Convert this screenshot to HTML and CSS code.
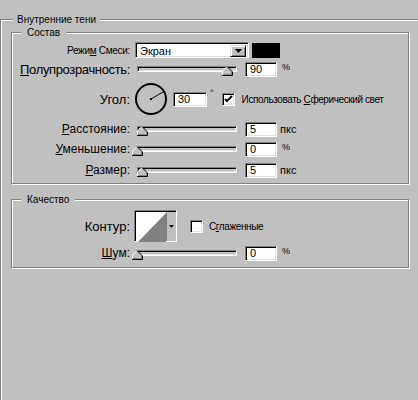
FILE: index.html
```html
<!DOCTYPE html>
<html lang="ru">
<head>
<meta charset="utf-8">
<title>Внутренние тени</title>
<link rel="stylesheet" href="styles.css">
</head>
<body>
<fieldset class="group outer">
  <legend>Внутренние тени</legend>

  <fieldset class="group sub sub-struct">
    <legend>Состав</legend>

    <div class="row row-mode">
      <span class="lbl sm">Режи<u>м</u> Смеси:</span>
      <div class="select">
        <span class="select-value">Экран</span>
        <span class="select-btn"><svg width="7" height="4" viewBox="0 0 7 4"><polygon points="0,0 7,0 3.5,4" fill="#000"/></svg></span>
      </div>
      <div class="swatch"></div>
    </div>

    <div class="row row-opacity">
      <span class="lbl lg tight"><u>П</u>олупрозрачность:</span>
      <div class="slider">
        <div class="track"></div>
        <svg class="thumb" style="left: calc(90% - 5px)" width="11" height="10" viewBox="0 0 11 10"><polygon points="0.5,9.5 0.5,5 5,0.5 9.5,5 9.5,9.5" fill="#c0c0c0"/><polyline points="0.5,9 0.5,5 5,0.5" fill="none" stroke="#fff"/><polyline points="5,0.5 10.5,6 10.5,9.5 0,9.5" fill="none" stroke="#000"/><polyline points="9.5,6 9.5,8.5 1,8.5" fill="none" stroke="#808080"/></svg>
      </div>
      <div class="field">90</div>
      <span class="unit pct">%</span>
    </div>

    <div class="row row-angle">
      <span class="lbl lg">Угол:</span>
      <svg class="dial" width="34" height="34" viewBox="0 0 34 34">
        <circle cx="17" cy="17" r="15" fill="none" stroke="#000" stroke-width="2"/>
        <line x1="17" y1="17" x2="29" y2="10" stroke="#000" stroke-width="1"/>
        <rect x="16" y="16" width="2" height="2" fill="#000"/>
      </svg>
      <div class="field field-angle">30</div>
      <span class="deg">°</span>
      <span class="check checked"><svg width="9" height="9" viewBox="0 0 9 9"><polyline points="1,4 3,6 8,1" fill="none" stroke="#000" stroke-width="2"/></svg></span>
      <span class="check-lbl">Использовать <u>С</u>ферический свет</span>
    </div>

    <div class="row row-slider row-dist">
      <span class="lbl md"><u>Р</u>асстояние:</span>
      <div class="slider">
        <div class="track"></div>
        <svg class="thumb" style="left: calc(5% - 5px)" width="11" height="10" viewBox="0 0 11 10"><polygon points="0.5,9.5 0.5,5 5,0.5 9.5,5 9.5,9.5" fill="#c0c0c0"/><polyline points="0.5,9 0.5,5 5,0.5" fill="none" stroke="#fff"/><polyline points="5,0.5 10.5,6 10.5,9.5 0,9.5" fill="none" stroke="#000"/><polyline points="9.5,6 9.5,8.5 1,8.5" fill="none" stroke="#808080"/></svg>
      </div>
      <div class="field">5</div>
      <span class="unit">пкс</span>
    </div>

    <div class="row row-slider row-choke">
      <span class="lbl md"><u>У</u>меньшение:</span>
      <div class="slider">
        <div class="track"></div>
        <svg class="thumb" style="left: calc(0% - 5px)" width="11" height="10" viewBox="0 0 11 10"><polygon points="0.5,9.5 0.5,5 5,0.5 9.5,5 9.5,9.5" fill="#c0c0c0"/><polyline points="0.5,9 0.5,5 5,0.5" fill="none" stroke="#fff"/><polyline points="5,0.5 10.5,6 10.5,9.5 0,9.5" fill="none" stroke="#000"/><polyline points="9.5,6 9.5,8.5 1,8.5" fill="none" stroke="#808080"/></svg>
      </div>
      <div class="field">0</div>
      <span class="unit pct">%</span>
    </div>

    <div class="row row-slider row-size">
      <span class="lbl md"><u>Р</u>азмер:</span>
      <div class="slider">
        <div class="track"></div>
        <svg class="thumb" style="left: calc(5% - 5px)" width="11" height="10" viewBox="0 0 11 10"><polygon points="0.5,9.5 0.5,5 5,0.5 9.5,5 9.5,9.5" fill="#c0c0c0"/><polyline points="0.5,9 0.5,5 5,0.5" fill="none" stroke="#fff"/><polyline points="5,0.5 10.5,6 10.5,9.5 0,9.5" fill="none" stroke="#000"/><polyline points="9.5,6 9.5,8.5 1,8.5" fill="none" stroke="#808080"/></svg>
      </div>
      <div class="field">5</div>
      <span class="unit">пкс</span>
    </div>
  </fieldset>

  <fieldset class="group sub sub-quality">
    <legend>Качество</legend>

    <div class="row row-contour">
      <span class="lbl lg">Контур:</span>
      <div class="contour">
        <svg class="contour-preview" width="30" height="30" viewBox="0 0 30 30">
          <rect width="30" height="30" fill="#fff"/>
          <polygon points="2,30 30,1 30,30" fill="#808080"/>
        </svg>
        <span class="contour-btn"><svg width="5" height="3" viewBox="0 0 5 3"><polygon points="0,0 5,0 2.5,3" fill="#000"/></svg></span>
      </div>
      <span class="check"></span>
      <span class="check-lbl">С<u>г</u>лаженные</span>
    </div>

    <div class="row row-slider row-noise">
      <span class="lbl md"><u>Ш</u>ум:</span>
      <div class="slider">
        <div class="track"></div>
        <svg class="thumb" style="left: calc(0% - 5px)" width="11" height="10" viewBox="0 0 11 10"><polygon points="0.5,9.5 0.5,5 5,0.5 9.5,5 9.5,9.5" fill="#c0c0c0"/><polyline points="0.5,9 0.5,5 5,0.5" fill="none" stroke="#fff"/><polyline points="5,0.5 10.5,6 10.5,9.5 0,9.5" fill="none" stroke="#000"/><polyline points="9.5,6 9.5,8.5 1,8.5" fill="none" stroke="#808080"/></svg>
      </div>
      <div class="field">0</div>
      <span class="unit pct">%</span>
    </div>
  </fieldset>
</fieldset>
</body>
</html>
```

FILE: styles.css
```css
* { box-sizing: border-box; }

html, body {
  margin: 0;
  height: 400px;
  overflow: hidden;
  background: #c0c0c0;
}

body {
  font-family: "Liberation Sans", Arial, sans-serif;
  font-size: 11px;
  color: #000;
}

u { text-decoration: underline; text-underline-offset: 1px; }

.group {
  margin: 0;
  padding: 0;
  min-width: 0;
  border: 1px solid #808080;
  box-shadow: inset 1px 1px 0 #fff, 1px 1px 0 #fff;
}

.group > legend {
  font-size: 10px;
  line-height: 13px;
  background: #c0c0c0;
}

.outer {
  margin-top: 13px;
  width: 440px;
  height: 430px;
  padding: 0 0 0 10px;
}

.outer > legend {
  margin-left: 2px;
  padding: 0 4px;
}

.sub {
  width: 398px;
  display: flex;
  flex-direction: column;
}

.sub > legend {
  margin-left: 9px;
  padding: 0 6px;
}

.sub-struct {
  padding: 3px 0 5px 0;
}

.sub-quality {
  margin-top: 9px;
  padding: 4px 0 6px 0;
}

.row {
  display: flex;
  align-items: center;
  height: 16px;
}

.row-opacity { margin-top: 3px; height: 17px; }
.row-angle { margin-top: 4px; height: 34px; }
.row-dist { margin-top: 5px; }
.row-choke { margin-top: 4px; }
.row-size { margin-top: 5px; }
.row-contour { height: 32px; }
.row-noise { margin-top: 3px; }

.lbl {
  width: 118px;
  text-align: right;
  white-space: nowrap;
  flex: none;
}
.lbl.sm { font-size: 10px; letter-spacing: -0.3px; }
.lbl.md { font-size: 12px; }
.lbl.lg { font-size: 13px; }
.lbl.tight { letter-spacing: -0.35px; }

/* dropdown */
.select {
  margin-left: 5px;
  width: 114px;
  height: 16px;
  display: flex;
  background: #fff;
  border-top: 1px solid #808080;
  border-left: 1px solid #808080;
  border-bottom: 1px solid #fff;
  border-right: 1px solid #fff;
  box-shadow: inset 1px 1px 0 #000, inset -1px -1px 0 #dfdfdf;
  padding: 2px;
}
.select-value {
  flex: 1;
  font-size: 11px;
  line-height: 12px;
  padding-left: 2px;
}
.select-btn {
  width: 16px;
  height: 12px;
  background: #c0c0c0;
  border-top: 1px solid #dfdfdf;
  border-left: 1px solid #dfdfdf;
  border-right: 1px solid #000;
  border-bottom: 1px solid #000;
  box-shadow: inset 1px 1px 0 #fff, inset -1px -1px 0 #808080;
  display: flex;
  align-items: center;
  justify-content: center;
}
.select-btn svg { display: block; }

.swatch {
  margin-left: 3px;
  width: 28px;
  height: 15px;
  background: #000;
}

/* slider */
.slider {
  position: relative;
  margin-left: 7px;
  width: 100px;
  height: 16px;
  align-self: flex-start;
  flex: none;
}
.track {
  margin-top: 5px;
  height: 6px;
  border-top: 1px solid #808080;
  border-left: 1px solid #808080;
  border-bottom: 1px solid #fff;
  border-right: 1px solid #fff;
  box-shadow: inset 1px 1px 0 #000, inset -1px -1px 0 #dfdfdf;
  background: #c0c0c0;
}
.thumb {
  position: absolute;
  top: 5px;
  display: block;
}

/* text field */
.field {
  margin-left: 8px;
  width: 32px;
  height: 15px;
  background: #fff;
  border-top: 1px solid #808080;
  border-left: 1px solid #808080;
  border-bottom: 1px solid #fff;
  border-right: 1px solid #fff;
  box-shadow: inset 1px 1px 0 #000, inset -1px -1px 0 #dfdfdf;
  font-size: 11px;
  line-height: 13px;
  padding-left: 4px;
  flex: none;
}
.field-angle {
  margin-left: 5px;
  width: 34px;
}

.unit {
  margin-left: 3px;
  font-size: 11px;
}
.unit.pct {
  font-size: 9px;
  margin-left: 5px;
  align-self: flex-start;
  margin-top: 1px;
}

.dial {
  display: block;
  margin-left: 4px;
  flex: none;
}

.deg {
  margin-left: 3px;
  align-self: flex-start;
  margin-top: 7px;
  font-size: 9px;
  line-height: 9px;
}

.check {
  width: 13px;
  height: 13px;
  flex: none;
  background: #fff;
  border-top: 1px solid #808080;
  border-left: 1px solid #808080;
  border-bottom: 1px solid #fff;
  border-right: 1px solid #fff;
  box-shadow: inset 1px 1px 0 #000, inset -1px -1px 0 #dfdfdf;
  display: flex;
  align-items: center;
  justify-content: center;
}
.row-angle .check { margin-left: 8px; }
.check svg { display: block; }

.check-lbl {
  margin-left: 7px;
  font-size: 10px;
  letter-spacing: -0.4px;
  white-space: nowrap;
}

/* contour picker */
.contour {
  margin-left: 4px;
  width: 43px;
  height: 32px;
  display: flex;
  border-top: 1px solid #808080;
  border-left: 1px solid #808080;
  border-bottom: 1px solid #fff;
  border-right: 1px solid #fff;
  box-shadow: inset 1px 1px 0 #000;
  padding: 1px 0 0 1px;
  background: #c0c0c0;
}
.contour-preview { display: block; flex: none; }
.contour-btn {
  flex: 1;
  border-left: 1px solid #808080;
  display: flex;
  align-items: center;
  justify-content: center;
  background: #c0c0c0;
}
.contour-btn svg { display: block; }

.row-contour .check { margin-left: 13px; }
.row-contour .check-lbl { margin-left: 6px; }
```
